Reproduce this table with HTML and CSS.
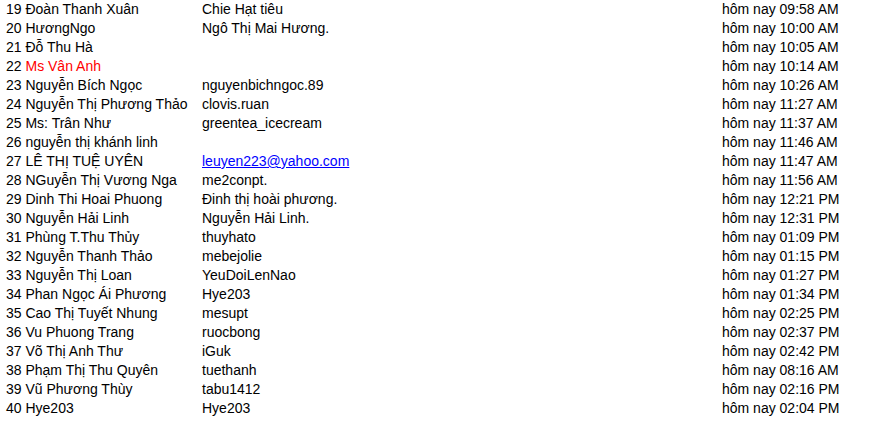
FILE: index.html
```html
<!DOCTYPE html>
<html>
<head>
<meta charset="utf-8">
<link rel="stylesheet" href="styles.css">
</head>
<body>
<div class="list">
  <div class="row"><span class="name">19 Đoàn Thanh Xuân</span><span class="nick">Chie Hạt tiêu</span><span class="time">hôm nay 09:58 AM</span></div>
  <div class="row"><span class="name">20 HươngNgo</span><span class="nick">Ngô Thị Mai Hương.</span><span class="time">hôm nay 10:00 AM</span></div>
  <div class="row"><span class="name">21 Đỗ Thu Hà</span><span class="nick"></span><span class="time">hôm nay 10:05 AM</span></div>
  <div class="row"><span class="name">22 <span class="red">Ms Vân Anh</span></span><span class="nick"></span><span class="time">hôm nay 10:14 AM</span></div>
  <div class="row"><span class="name">23 Nguyễn Bích Ngọc</span><span class="nick">nguyenbichngoc.89</span><span class="time">hôm nay 10:26 AM</span></div>
  <div class="row"><span class="name">24 Nguyễn Thị Phương Thảo</span><span class="nick">clovis.ruan</span><span class="time">hôm nay 11:27 AM</span></div>
  <div class="row"><span class="name">25 Ms: Trân Như</span><span class="nick">greentea_icecream</span><span class="time">hôm nay 11:37 AM</span></div>
  <div class="row"><span class="name">26 nguyễn thị khánh linh</span><span class="nick"></span><span class="time">hôm nay 11:46 AM</span></div>
  <div class="row"><span class="name">27 LÊ THỊ TUỆ UYÊN</span><span class="nick"><a class="link" href="#">leuyen223@yahoo.com</a></span><span class="time">hôm nay 11:47 AM</span></div>
  <div class="row"><span class="name">28 NGuyễn Thị Vương Nga</span><span class="nick">me2conpt.</span><span class="time">hôm nay 11:56 AM</span></div>
  <div class="row"><span class="name">29 Dinh Thi Hoai Phuong</span><span class="nick">Đinh thị hoài phương.</span><span class="time">hôm nay 12:21 PM</span></div>
  <div class="row"><span class="name">30 Nguyễn Hải Linh</span><span class="nick">Nguyễn Hải Linh.</span><span class="time">hôm nay 12:31 PM</span></div>
  <div class="row"><span class="name">31 Phùng T.Thu Thủy</span><span class="nick">thuyhato</span><span class="time">hôm nay 01:09 PM</span></div>
  <div class="row"><span class="name">32 Nguyễn Thanh Thảo</span><span class="nick">mebejolie</span><span class="time">hôm nay 01:15 PM</span></div>
  <div class="row"><span class="name">33 Nguyễn Thị Loan</span><span class="nick">YeuDoiLenNao</span><span class="time">hôm nay 01:27 PM</span></div>
  <div class="row"><span class="name">34 Phan Ngọc Ái Phương</span><span class="nick">Hye203</span><span class="time">hôm nay 01:34 PM</span></div>
  <div class="row"><span class="name">35 Cao Thị Tuyết Nhung</span><span class="nick">mesupt</span><span class="time">hôm nay 02:25 PM</span></div>
  <div class="row"><span class="name">36 Vu Phuong Trang</span><span class="nick">ruocbong</span><span class="time">hôm nay 02:37 PM</span></div>
  <div class="row"><span class="name">37 Võ Thị Anh Thư</span><span class="nick">iGuk</span><span class="time">hôm nay 02:42 PM</span></div>
  <div class="row"><span class="name">38 Phạm Thị Thu Quyên</span><span class="nick">tuethanh</span><span class="time">hôm nay 08:16 AM</span></div>
  <div class="row"><span class="name">39 Vũ Phương Thùy</span><span class="nick">tabu1412</span><span class="time">hôm nay 02:16 PM</span></div>
  <div class="row"><span class="name">40 Hye203</span><span class="nick">Hye203</span><span class="time">hôm nay 02:04 PM</span></div>
</div>
</body>
</html>
```
FILE: styles.css
```css
html, body {
  margin: 0;
  padding: 0;
  background: #ffffff;
}
body {
  font-family: "Liberation Sans", Arial, sans-serif;
  font-size: 14px;
  color: #000000;
}
.list {
  padding-left: 6px;
}
.row {
  display: grid;
  grid-template-columns: 196px 520px auto;
  line-height: 19px;
  height: 19px;
  white-space: nowrap;
}
.red {
  color: #ff0000;
}
.link {
  color: #0000ff;
  text-decoration: underline;
}
```
